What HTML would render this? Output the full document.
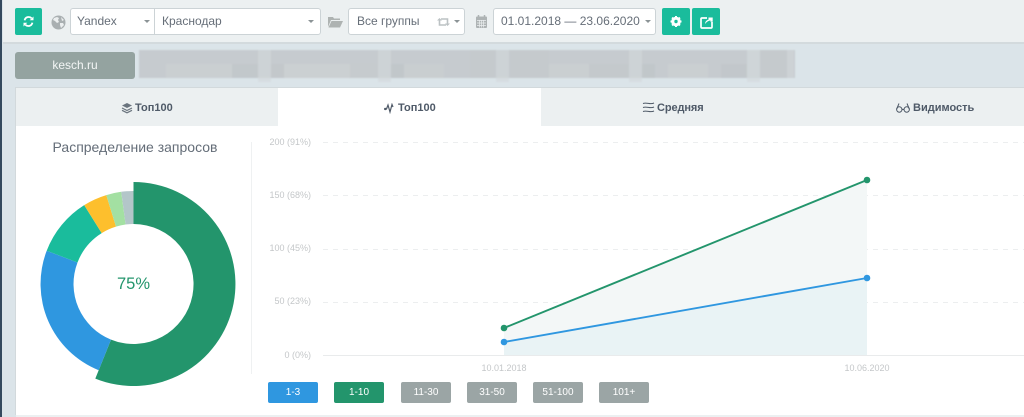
<!DOCTYPE html>
<html lang="ru"><head><meta charset="utf-8"><title>Распределение запросов</title>
<style>
*{box-sizing:border-box}
html,body{margin:0;padding:0}
body{width:1024px;height:417px;overflow:hidden;position:relative;background:#dbe4e9;font-family:"Liberation Sans",sans-serif;color:#555f6b}
.a{position:absolute}
.top{left:3px;top:0;width:1021px;height:44px;background:#ecf0f1;border-bottom:2px solid #d3dadd}
.btn{position:absolute;top:8px;height:27px;background:#1abc9c;border-radius:2px}
.field{position:absolute;top:8px;height:27px;background:#fff;border:1px solid #ccd3d6;font-size:12px;line-height:25px;color:#666e78;padding-left:6px;white-space:nowrap}
.car{position:absolute;top:11px;width:0;height:0;border-left:3.5px solid transparent;border-right:3.5px solid transparent;border-top:3.5px solid #8b9396}
.tab{position:absolute;top:88px;height:38px;background:#ecf0f1;font-size:11px;font-weight:bold;line-height:40px;color:#4f5a68;white-space:nowrap}
.tab span,.tab svg{position:absolute}
.yl{position:absolute;width:50px;left:261px;text-align:right;font-size:9px;color:#c4c7c9;line-height:12px;white-space:nowrap}
.rng{position:absolute;top:382px;height:21px;width:50px;border-radius:2px;background:#9ba5a5;color:#fff;font-size:10px;line-height:22px;text-align:center}
</style></head><body>
<div class="a" style="left:0;top:0;width:2px;height:417px;background:#34495e"></div>
<div class="a top"></div>

<div class="btn" style="left:15px;width:27px"><svg width="27" height="27" viewBox="0 0 27 27"><path d="M9.600 12.300a4.100 4.100 0 0 1 7-2M17.400 14.700a4.100 4.100 0 0 1-7 2" fill="none" stroke="#fff" stroke-width="1.800"/><path d="M18.500 8.500v3.800h-3.800zM8.500 18.500v-3.800h3.800z" fill="#fff"/></svg></div>
<svg class="a" style="left:51px;top:15px" width="15" height="15" viewBox="0 0 15 15"><circle cx="7.500" cy="7.500" r="7" fill="#a9afb1"/><path d="M3 3l3-1 2 1-1 2 1 2-2 1-2-2-2-1zM9 8l3 0 1 2-3 3-1-3zM10 2l3 3-2 1z" fill="#eceff0"/></svg>
<div class="field" style="left:70px;width:85px;border-radius:3px 0 0 3px">Yandex<i class="car" style="left:73px"></i></div>
<div class="field" style="left:154px;width:167px;border-radius:0 3px 3px 0;padding-left:7px">Краснодар<i class="car" style="left:153px"></i></div>
<svg class="a" style="left:328px;top:16px" width="15" height="12" viewBox="0 0 15 12"><path d="M0 11V1h5l1 1.500h6V4H3z" fill="#aeb3b2"/><path d="M.5 11.500L3.500 5H15l-3 6.500z" fill="#aeb3b2"/></svg>
<div class="field" style="left:348px;width:117px;border-radius:3px;padding-left:8px">Все группы<svg class="a" style="left:88px;top:8px" width="13" height="10" viewBox="0 0 13 10"><path d="M2.500 2v6H9M10.500 8V2H4" fill="none" stroke="#bcc2c4" stroke-width="1.600"/><path d="M0 3.500l2.500-2.500L5 3.500zM8 6.500l2.500 2.500L13 6.500z" fill="#bcc2c4"/></svg><i class="car" style="left:105px"></i></div>
<svg class="a" style="left:476px;top:15px" width="11" height="13" viewBox="0 0 11 13"><rect x="0" y="1.500" width="11" height="11.500" rx="1" fill="#aeb3b4"/><path d="M1 5.500h9M1 8h9M1 10.500h9M3.500 5v7.500M5.500 5v7.500M7.500 5v7.500" stroke="#eceff0" stroke-width=".7"/><path d="M2.500 0v3M8.500 0v3" stroke="#aeb3b4" stroke-width="1.500"/></svg>
<div class="field" style="left:493px;width:163px;border-radius:3px;padding-left:7px">01.01.2018 — 23.06.2020<i class="car" style="left:151px"></i></div>
<div class="btn" style="left:662px;width:28px"><svg width="28" height="27" viewBox="0 0 28 27"><circle cx="14" cy="13.500" r="3.500" fill="none" stroke="#fff" stroke-width="2.600"/><path d="M14 8v11M8.500 13.500h11M10.100 9.600l7.800 7.800M17.900 9.600l-7.800 7.800" stroke="#fff" stroke-width="2"/><circle cx="14" cy="13.500" r="1.700" fill="#1abc9c"/></svg></div>
<div class="btn" style="left:692px;width:28px"><svg width="28" height="27" viewBox="0 0 28 27"><path d="M15 10H10a1 1 0 0 0-1 1v8a1 1 0 0 0 1 1h9a1 1 0 0 0 1-1v-5" fill="none" stroke="#fff" stroke-width="1.700"/><path d="M13 16c.3-2.500 1.500-4 3.500-4.300V9.500l4.200 0v4.200H18.500l-.0-1.200C16 12.800 14.500 14.200 13 16z" fill="#fff"/></svg></div>

<div class="a" style="left:15px;top:52px;width:120px;height:27px;background:#94a3a0;border-radius:3px;color:#f3f6f5;font-size:12px;line-height:27px;text-align:center">kesch.ru</div>
<svg class="a" style="left:136px;top:47px" width="662" height="38" viewBox="0 0 662 38"><defs><filter id="b" x="-2%" y="-20%" width="104%" height="140%"><feGaussianBlur stdDeviation=".7"/></filter></defs><g filter="url(#b)"><rect x="3" y="3" width="656" height="28" fill="#c6cbcf"/><rect x="30" y="17" width="66" height="14" fill="#cacfd1"/><rect x="96" y="17" width="26" height="14" fill="#c2c8cb"/><rect x="122" y="3" width="13" height="28" fill="#cdd3d6"/><rect x="122" y="31" width="13" height="4" fill="#d6dde1"/><rect x="135" y="17" width="13" height="14" fill="#c3c8cb"/><rect x="148" y="17" width="66" height="14" fill="#cbd0d2"/><rect x="214" y="17" width="26" height="14" fill="#c6cbce"/><rect x="242" y="3" width="13" height="28" fill="#cdd3d6"/><rect x="242" y="31" width="13" height="4" fill="#d6dde1"/><rect x="255" y="17" width="13" height="14" fill="#c1c7ca"/><rect x="268" y="17" width="40" height="14" fill="#c9ced0"/><rect x="334" y="3" width="26" height="28" fill="#c5cacd"/><rect x="360" y="3" width="13" height="28" fill="#cdd3d6"/><rect x="360" y="31" width="13" height="4" fill="#d6dde1"/><rect x="373" y="3" width="40" height="28" fill="#c5cacd"/><rect x="413" y="17" width="40" height="14" fill="#cacfd1"/><rect x="453" y="17" width="40" height="14" fill="#c4c9cc"/><rect x="493" y="3" width="13" height="28" fill="#cdd3d6"/><rect x="493" y="31" width="13" height="4" fill="#d6dde1"/><rect x="506" y="17" width="13" height="14" fill="#c1c7ca"/><rect x="532" y="17" width="40" height="14" fill="#cacfd1"/><rect x="585" y="17" width="26" height="14" fill="#c2c7cb"/><rect x="611" y="3" width="13" height="28" fill="#cfd5d8"/><rect x="611" y="31" width="13" height="4" fill="#d6dde1"/><rect x="624" y="3" width="27" height="28" fill="#c5cacd"/><rect x="651" y="3" width="7" height="28" fill="#cdd2d5"/></g></svg>

<div class="a" style="left:15px;top:87px;width:1009px;height:328px;background:#fff;border-top:1px solid #d2d9dc;border-left:1px solid #d2d9dc"></div>
<div class="a" style="left:16px;top:415px;width:1008px;height:2px;background:#ecf0f1"></div>

<div class="tab" style="left:16px;width:262px"><svg style="left:105px;top:14px" width="12" height="12" viewBox="0 0 12 12"><path d="M6 1L11 3.500 6 6 1 3.500z" fill="#6a747e"/><path d="M1 6l5 2.500L11 6M1 8.300l5 2.500 5-2.500" fill="none" stroke="#6a747e" stroke-width="1.200"/></svg><span style="left:119px">Топ100</span></div>
<div class="tab" style="left:278px;width:263px;background:#fff"><svg style="left:106px;top:15px" width="11" height="11" viewBox="0 0 11 11"><path d="M.5 6L2.500 6 4 2 6 9 8 1.500 9 4" fill="none" stroke="#4f5a68" stroke-width="1.200"/><circle cx="1.200" cy="6" r="1.200" fill="#4f5a68"/></svg><span style="left:120px">Топ100</span></div>
<div class="tab" style="left:541px;width:300px"><svg style="left:101px;top:13px" width="13" height="13" viewBox="0 0 13 13"><path d="M1 2.500C5 1 8 4 12 2M1 6.500C5 5 8 8 12 6M1 10.500C5 9 8 12 12 10" fill="none" stroke="#4f5a68" stroke-width="1"/></svg><span style="left:116px;letter-spacing:-.1px">Средняя</span></div>
<div class="tab" style="left:841px;width:183px"><svg style="left:55px;top:13px" width="14" height="13" viewBox="0 0 14 13"><circle cx="3.300" cy="8.500" r="2.700" fill="none" stroke="#4f5a68" stroke-width="1"/><circle cx="10.700" cy="8.500" r="2.700" fill="none" stroke="#4f5a68" stroke-width="1"/><path d="M6 8.500h2M.7 8L3 2.500M13.300 8L11 2.500" fill="none" stroke="#4f5a68" stroke-width="1"/></svg><span style="left:72px">Видимость</span></div>

<div class="a" style="left:16px;width:238px;top:139px;text-align:center;font-size:14px;color:#646d78;line-height:16px">Распределение запросов</div>
<div class="a" style="left:251px;top:142px;width:1px;height:232px;background:#eff1f2"></div>

<svg class="a" style="left:0;top:0" width="1024" height="417" viewBox="0 0 1024 417">
<path d="M133.500 182A102 102 0 1 1 95.300 378.600L111 339.600A60 60 0 1 0 133.500 224Z" fill="#23956c"/>
<path d="M98.700 370.200A93 93 0 0 1 46.700 250.700L77.500 262.500A60 60 0 0 0 111 339.600Z" fill="#2f97e0"/>
<path d="M46.700 250.700A93 93 0 0 1 84.200 205.100L101.700 233.100A60 60 0 0 0 77.500 262.500Z" fill="#1abc9c"/>
<path d="M84.200 205.100A93 93 0 0 1 106.300 195.100L116 226.600A60 60 0 0 0 101.700 233.100Z" fill="#fdbf2d"/>
<path d="M106.300 195.100A93 93 0 0 1 121.200 191.800L125.600 224.500A60 60 0 0 0 116 226.600Z" fill="#a3e0a2"/>
<path d="M121.200 191.800A93 93 0 0 1 133.500 191L133.500 224A60 60 0 0 0 125.600 224.500Z" fill="#b3c6c9"/>
<text x="133.500" y="289" text-anchor="middle" font-family="'Liberation Sans',sans-serif" font-size="16.500" fill="#23956c">75%</text>
<g stroke="#eceeef" stroke-width="1" stroke-dasharray="5 5"><path d="M323 142.500H1024M323 195.500H1024M323 249.500H1024M323 302.500H1024"/></g>
<path d="M323 355.500H1024" stroke="#e9ebec" stroke-width="1"/>
<path d="M504 328L867 180V355H504Z" fill="#f3f7f7"/>
<path d="M504 342L867 278V355H504Z" fill="#e9f3f5"/>
<path d="M504 328L867 180" stroke="#23956c" stroke-width="1.900" fill="none"/>
<path d="M504 342L867 278" stroke="#2f97e0" stroke-width="1.900" fill="none"/>
<circle cx="504" cy="328" r="3.300" fill="#23956c"/><circle cx="867" cy="180" r="3.300" fill="#23956c"/>
<circle cx="504" cy="342" r="3.300" fill="#2f97e0"/><circle cx="867" cy="278" r="3.300" fill="#2f97e0"/>
</svg>

<div class="yl" style="top:136px">200 (91%)</div>
<div class="yl" style="top:189px">150 (68%)</div>
<div class="yl" style="top:242px">100 (45%)</div>
<div class="yl" style="top:295px">50 (23%)</div>
<div class="yl" style="top:349px">0 (0%)</div>
<div class="a" style="left:464px;top:362px;width:80px;text-align:center;font-size:9px;color:#c4c7c9;line-height:12px">10.01.2018</div>
<div class="a" style="left:827px;top:362px;width:80px;text-align:center;font-size:9px;color:#c4c7c9;line-height:12px">10.06.2020</div>

<div class="rng" style="left:268px;background:#2f97e0">1-3</div>
<div class="rng" style="left:334px;background:#23956c">1-10</div>
<div class="rng" style="left:401px">11-30</div>
<div class="rng" style="left:467px">31-50</div>
<div class="rng" style="left:533px">51-100</div>
<div class="rng" style="left:599px">101+</div>
</body></html>
